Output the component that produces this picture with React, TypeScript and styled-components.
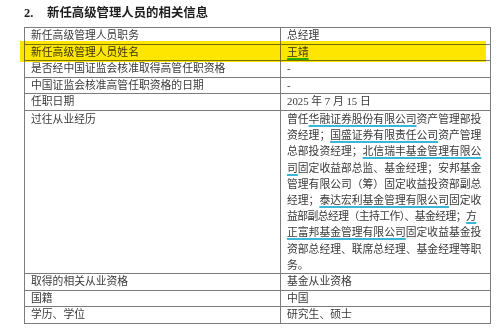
import React from 'react';
import styled, { createGlobalStyle } from 'styled-components';

const GlobalStyle = createGlobalStyle`
  body {
    margin: 0;
    background: #ffffff;
    font-family: "Liberation Serif", "Noto Sans CJK SC", serif;
    color: #3a3a3a;
  }
`;

const Page = styled.div`
  width: 500px;
  height: 334px;
  overflow: hidden;
  padding-left: 24px;
  box-sizing: border-box;
`;

const Title = styled.div`
  height: 27px;
  line-height: 27px;
  font-size: 12.4px;
  font-weight: 700;
  color: #1e1e1e;
  display: flex;
`;

const TitleNum = styled.span`
  width: 23px;
`;

const TableWrap = styled.div`
  position: relative;
  width: 466px;
`;

const Table = styled.table`
  border-collapse: collapse;
  width: 466px;
  table-layout: fixed;
  font-size: 10.8px;
`;

const Cell = styled.td<{ $tall?: boolean }>`
  border: 1px solid #7c7c7c;
  padding: 0 0 0 6px;
  line-height: ${(p) => (p.$tall ? '16.2px' : '15.6px')};
  vertical-align: top;
  white-space: nowrap;
`;

const Highlight = styled.div`
  position: absolute;
  left: -4px;
  top: 14px;
  width: 466px;
  height: 21px;
  background: #ffe600;
  mix-blend-mode: multiply;
  pointer-events: none;
`;

const Line = styled.div<{ $squeeze?: boolean }>`
  display: block;
  letter-spacing: ${(p) => (p.$squeeze ? '-0.55px' : '0')};
`;

const Mark = styled.span<{ $green?: boolean }>`
  text-decoration: underline;
  text-decoration-color: ${(p) => (p.$green ? '#2dbb2d' : '#3db6d6')};
  text-decoration-thickness: 2px;
  text-underline-offset: 2px;
`;

const rows: [string, React.ReactNode][] = [
  ['新任高级管理人员职务', '总经理'],
  ['新任高级管理人员姓名', <Mark $green>王靖</Mark>],
  ['是否经中国证监会核准取得高管任职资格', '-'],
  ['中国证监会核准高管任职资格的日期', '-'],
  ['任职日期', '2025 年 7 月 15 日'],
];

const tailRows: [string, string][] = [
  ['取得的相关从业资格', '基金从业资格'],
  ['国籍', '中国'],
  ['学历、学位', '研究生、硕士'],
];

const History = () => (
  <>
    <Line>曾任<Mark>华融证券股份有限公司</Mark>资产管理部投</Line>
    <Line>资经理；<Mark>国盛证券有限责任公司</Mark>资产管理</Line>
    <Line>总部投资经理；<Mark>北信瑞丰基金管理有限公</Mark></Line>
    <Line><Mark>司</Mark>固定收益部总监、基金经理；安邦基金</Line>
    <Line>管理有限公司（筹）固定收益投资部副总</Line>
    <Line>经理；<Mark>泰达宏利基金管理有限公司</Mark>固定收</Line>
    <Line $squeeze>益部副总经理（主持工作）、基金经理；<Mark>方</Mark></Line>
    <Line><Mark>正富邦基金管理有限公司</Mark>固定收益基金投</Line>
    <Line>资部总经理、联席总经理、基金经理等职</Line>
    <Line>务。</Line>
  </>
);

export default function App() {
  return (
    <Page>
      <GlobalStyle />
      <Title>
        <TitleNum>2.</TitleNum>
        <span>新任高级管理人员的相关信息</span>
      </Title>
      <TableWrap>
        <Table>
          <colgroup>
            <col style={{ width: 256 }} />
            <col style={{ width: 210 }} />
          </colgroup>
          <tbody>
            {rows.map(([k, v]) => (
              <tr key={k}>
                <Cell>{k}</Cell>
                <Cell>{v}</Cell>
              </tr>
            ))}
            <tr>
              <Cell $tall>过往从业经历</Cell>
              <Cell $tall>
                <History />
              </Cell>
            </tr>
            {tailRows.map(([k, v]) => (
              <tr key={k}>
                <Cell>{k}</Cell>
                <Cell>{v}</Cell>
              </tr>
            ))}
          </tbody>
        </Table>
        <Highlight />
      </TableWrap>
    </Page>
  );
}
